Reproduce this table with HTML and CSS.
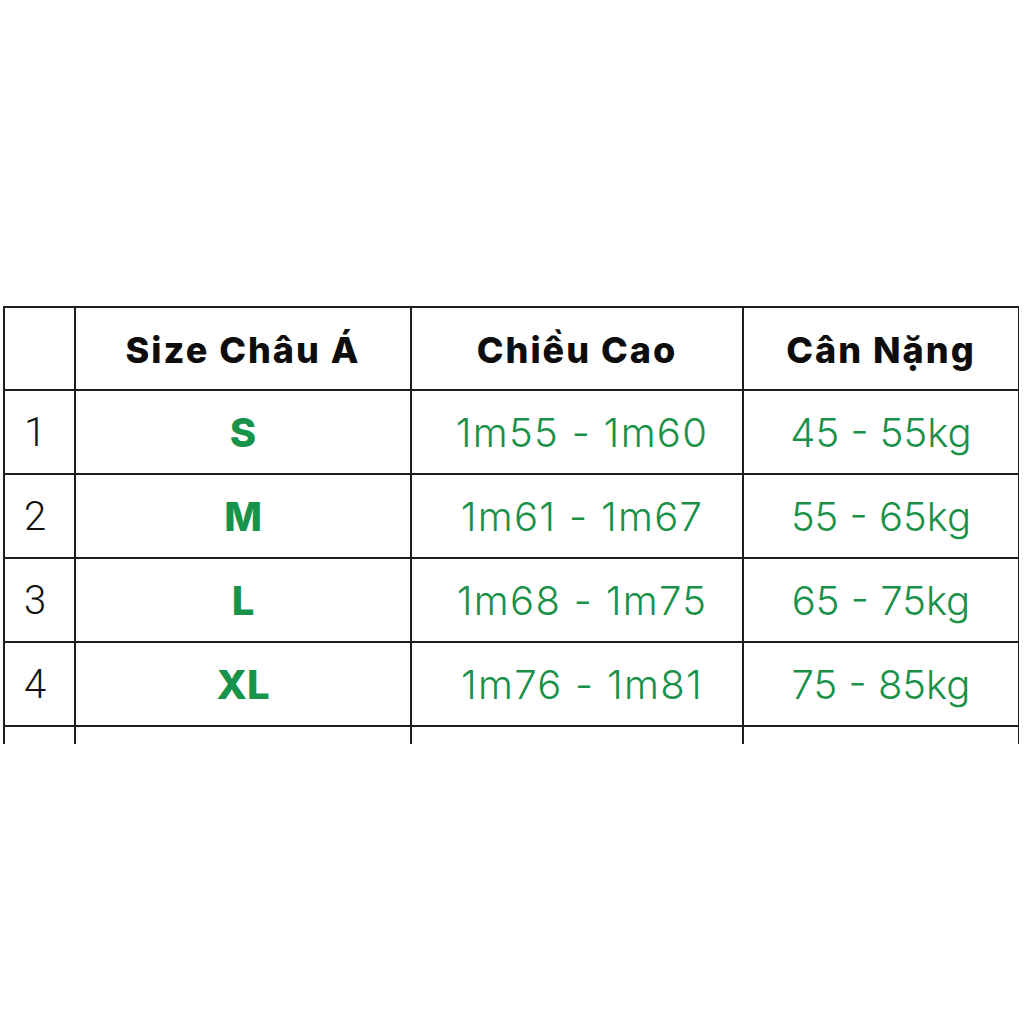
FILE: index.html
```html
<!DOCTYPE html>
<html lang="vi">
<head>
<meta charset="utf-8">
<title>Bảng size</title>
<link rel="stylesheet" href="styles.css">
</head>
<body>
<div class="page">
  <div class="clip">
    <table class="sizes">
      <colgroup>
        <col class="c-idx">
        <col class="c-size">
        <col class="c-height">
        <col class="c-weight">
      </colgroup>
      <tr class="head">
        <td></td>
        <td>Size Châu Á</td>
        <td>Chiều Cao</td>
        <td>Cân Nặng</td>
      </tr>
      <tr>
        <td class="idx">1</td>
        <td class="sz">S</td>
        <td class="val wide">1m55 - 1m60</td>
        <td class="val">45 - 55kg</td>
      </tr>
      <tr>
        <td class="idx">2</td>
        <td class="sz">M</td>
        <td class="val wide">1m61 - 1m67</td>
        <td class="val">55 - 65kg</td>
      </tr>
      <tr>
        <td class="idx">3</td>
        <td class="sz">L</td>
        <td class="val wide">1m68 - 1m75</td>
        <td class="val">65 - 75kg</td>
      </tr>
      <tr>
        <td class="idx">4</td>
        <td class="sz">XL</td>
        <td class="val wide">1m76 - 1m81</td>
        <td class="val">75 - 85kg</td>
      </tr>
      <tr>
        <td class="idx"></td>
        <td class="sz"></td>
        <td class="val"></td>
        <td class="val"></td>
      </tr>
    </table>
  </div>
</div>
</body>
</html>
```
FILE: styles.css
```css
html, body {
  margin: 0;
  padding: 0;
  background: #ffffff;
}

.page {
  width: 1024px;
  height: 1024px;
  padding-top: 306px;
  padding-left: 3px;
  box-sizing: border-box;
}

.clip {
  width: 1016px;
  height: 438px;
  overflow: hidden;
}

.sizes {
  border-collapse: collapse;
  table-layout: fixed;
  width: 1015px;
}

.c-idx { width: 71px; }
.c-size { width: 336px; }
.c-height { width: 332px; }
.c-weight { width: 276px; }

.sizes td {
  border: 2px solid #1e1e1e;
  height: 82px;
  padding: 0;
  text-align: center;
  vertical-align: middle;
}

.sizes tr.head td {
  height: 78px;
  padding-top: 3px;
  font-family: "Inter", "Noto Sans", sans-serif;
  font-weight: 800;
  font-size: 36px;
  color: #0d0d0d;
  letter-spacing: 2px;
}

.sizes td.idx {
  text-align: left;
  padding-left: 19px;
  font-family: "Roboto", "Liberation Sans", sans-serif;
  font-weight: 300;
  font-size: 40px;
  color: #111111;
}

.sizes td.sz {
  font-family: "Inter", "Noto Sans", sans-serif;
  font-weight: 800;
  font-size: 40px;
  color: #18944a;
}

.sizes td.val {
  font-family: "Inter", "Noto Sans", sans-serif;
  font-weight: 300;
  font-size: 40px;
  color: #1a9148;
}

.sizes td.wide {
  letter-spacing: 1.3px;
  padding-left: 10px;
}
```
